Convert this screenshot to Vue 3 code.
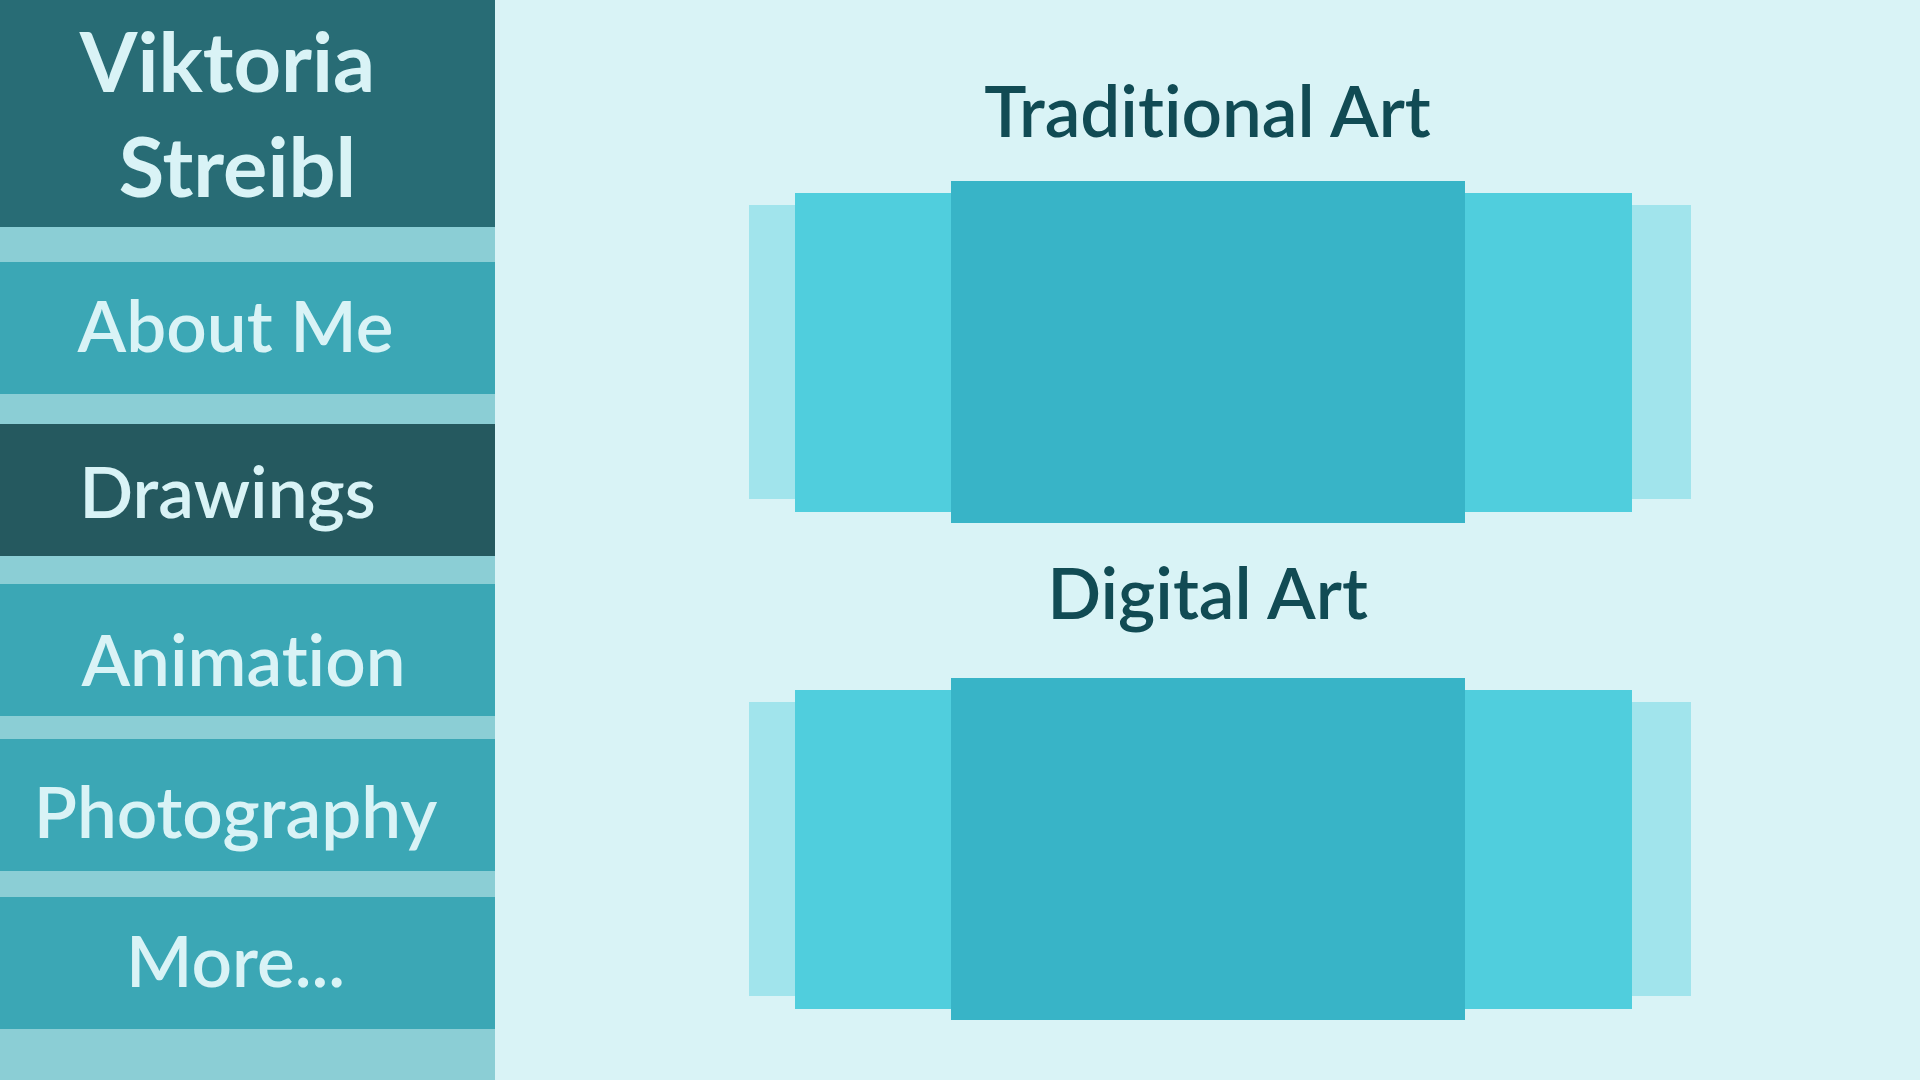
<script setup>
const links = [
  { label: 'About Me', slug: 'about' },
  { label: 'Drawings', slug: 'drawings', current: true },
  { label: 'Animation', slug: 'animation' },
  { label: 'Photography', slug: 'photography' },
  { label: 'More...', slug: 'more' },
]

const galleries = ['Traditional Art', 'Digital Art']
</script>

<template>
  <div class="page">
    <aside class="sidebar">
      <h1 class="name">
        <span class="first">Viktoria</span>
        <span>Streibl</span>
      </h1>
      <nav class="menu" aria-label="Main">
        <a
          v-for="link in links"
          :key="link.slug"
          :href="'#' + link.slug"
          :class="['item', link.slug, { current: link.current }]"
          :aria-current="link.current ? 'page' : null"
        >{{ link.label }}</a>
      </nav>
    </aside>

    <main class="content">
      <section v-for="title in galleries" :key="title" class="gallery">
        <h2 class="heading">{{ title }}</h2>
        <div class="carousel">
          <div class="slide far"></div>
          <div class="slide near"></div>
          <div class="slide front"></div>
          <div class="slide near"></div>
          <div class="slide far"></div>
        </div>
      </section>
    </main>
  </div>
</template>

<style>
body {
  margin: 0;
  background: #d9f3f6;
}
</style>

<style scoped>
.page {
  display: flex;
  min-height: 100vh;
  font-family: "Berlin Sans FB", Lato, "Open Sans", sans-serif;
  font-variant-ligatures: none;
  color: #d9f3f6;
}

.sidebar {
  flex: none;
  box-sizing: border-box;
  width: 495px;
  max-width: 40%;
  background: #8bced5;
}

.name {
  display: flex;
  flex-direction: column;
  box-sizing: border-box;
  min-height: 227px;
  margin: 0;
  padding: 8px 20px 9px 0;
  background: #286c75;
  font-size: 83px;
  font-weight: 700;
  line-height: 105px;
  text-align: center;
}

.first {
  padding-right: 20px;
}

.menu {
  display: flex;
  flex-direction: column;
  padding: 35px 0 51px;
}

.item {
  box-sizing: border-box;
  min-height: 132px;
  padding: 18px 24px 18px 0;
  background: #3ba7b5;
  color: inherit;
  font-size: 71px;
  font-weight: 600;
  line-height: 90px;
  text-align: center;
  text-decoration: none;
}

.current {
  background: #25595f;
}

.drawings {
  margin-top: 30px;
  padding: 22px 40px 18px 0;
}

.animation {
  margin-top: 28px;
  padding: 30px 8px 8px 0;
}

.photography {
  margin-top: 23px;
  padding: 27px 24px 8px 0;
}

.more {
  margin-top: 26px;
}

.content {
  flex: 1;
  min-width: 0;
  padding-top: 65px;
}

.gallery {
  padding-bottom: 24px;
}

.heading {
  margin: 0;
  padding-bottom: 26px;
  color: #114b54;
  font-size: 71px;
  font-weight: 600;
  line-height: 90px;
  text-align: center;
}

.gallery + .gallery .heading {
  padding-bottom: 41px;
}

.carousel {
  display: grid;
  grid-template-columns: 46fr 156fr 514fr 167fr 59fr;
  align-items: center;
  max-width: 942px;
  margin: 0 auto;
  padding-left: 25px;
}

.far {
  height: 294px;
  background: #a1e4ec;
}

.near {
  height: 319px;
  background: #50cedd;
}

.front {
  height: 342px;
  background: #38b4c7;
}
</style>
